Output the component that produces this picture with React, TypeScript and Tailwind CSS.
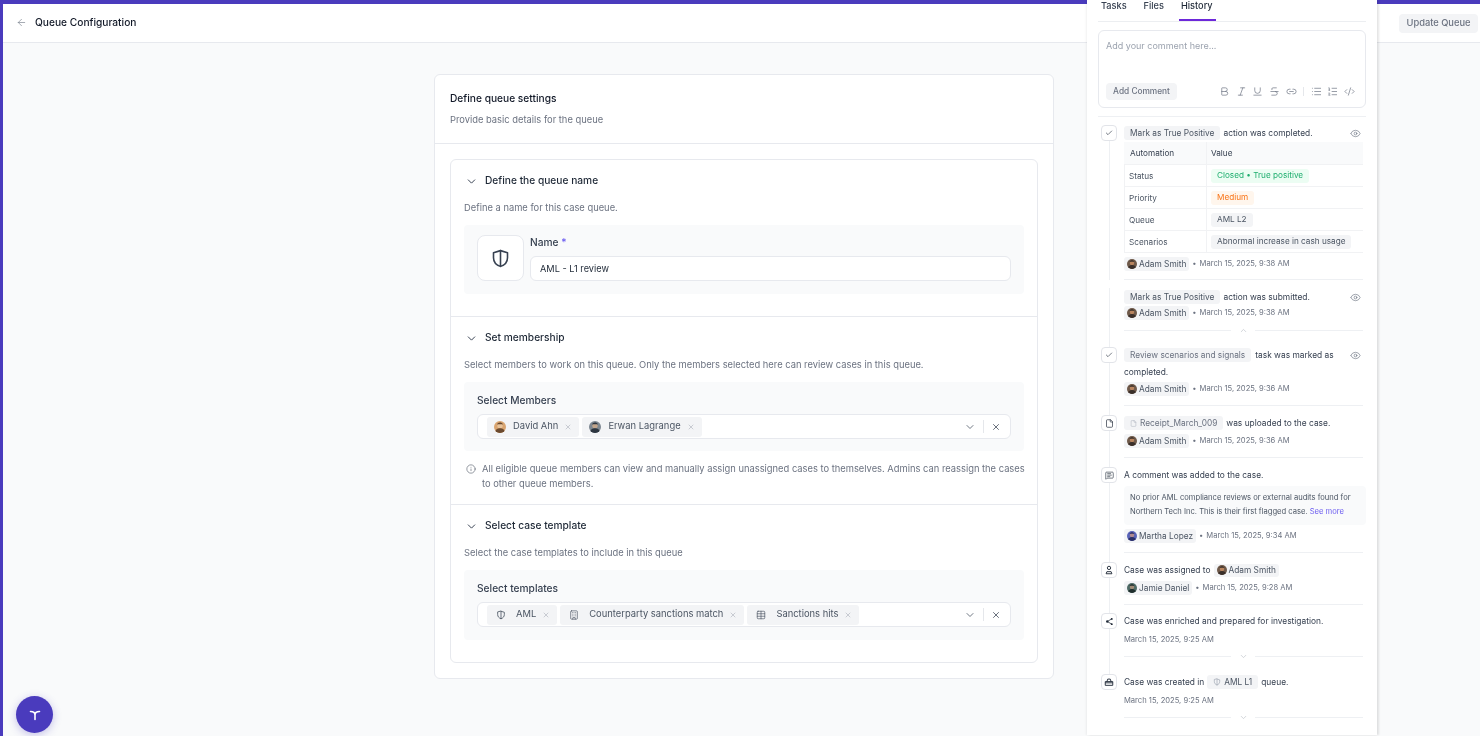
import { ReactNode } from 'react';
import {
  ArrowLeft,
  Bold,
  Building,
  Check,
  ChevronDown,
  ChevronUp,
  CodeXml,
  Eye,
  File,
  Info,
  Italic,
  Link2,
  List,
  ListOrdered,
  MessageSquareText,
  Strikethrough,
  Table,
  Underline,
  X,
} from 'lucide-react';

const ShieldIcon = ({ size = 20, className = '', sw = 2 }: { size?: number; className?: string; sw?: number }) => (
  <svg width={size} height={size} viewBox="0 0 24 24" fill="none" stroke="currentColor" strokeWidth={sw} strokeLinejoin="round" strokeLinecap="round" className={className}>
    <path d="M12 3 20 5.500V11c0 5-3.400 8.400-8 10-4.600-1.600-8-5-8-10V5.500z" />
    <path d="M12 3v18" />
  </svg>
);

const Avatar = ({ tone = 'adam', size = 10 }: { tone?: 'adam' | 'david' | 'erwan' | 'martha' | 'jamie'; size?: number }) => {
  const colors = {
    adam: ['#6f5a4a', '#3a2f2a', '#b9855f'],
    david: ['#d9a46f', '#6b4a2f', '#e8c39a'],
    erwan: ['#7d8790', '#2d3640', '#c2a68c'],
    martha: ['#5a64b8', '#2a2f66', '#b08a90'],
    jamie: ['#4f6b66', '#1f2e2d', '#a08d78'],
  }[tone];
  return (
    <svg width={size} height={size} viewBox="0 0 20 20" className="shrink-0 rounded-full">
      <rect width="20" height="20" fill={colors[0]} />
      <circle cx="10" cy="8" r="4.500" fill={colors[2]} />
      <path d="M1 20c1-6 5-8 9-8s8 2 9 8z" fill={colors[1]} />
      <path d="M5 6c1-4 8-5 10 0-3-1-7-1-10 0z" fill={colors[1]} />
    </svg>
  );
};

const Section = ({
  title,
  desc,
  h,
  border = true,
  children,
}: {
  title: string;
  desc: string;
  h: string;
  border?: boolean;
  children: ReactNode;
}) => (
  <div className={`${h} px-[13px] ${border ? 'border-b border-[#e7e9ee]' : ''}`}>
    <div className="flex h-[41px] items-center gap-[7px] pl-[1px] pt-[1px]">
      <ChevronDown size={13} strokeWidth={1.8} className="text-[#374151]" />
      <span className="text-[10.2px] font-medium text-[#1f2937]">{title}</span>
    </div>
    <p className="h-[13px] text-[9.35px] leading-[13px] text-[#6b7280]">{desc}</p>
    {children}
  </div>
);

const Tag = ({ icon, label, photo = false }: { icon: ReactNode; label: string; photo?: boolean }) => (
  <span className={`flex h-[20px] items-center rounded-[3px] bg-[#f3f4f6] pr-[7px] text-[9.4px] text-[#4b5563] ${photo ? 'pl-[7px]' : 'pl-[9px]'}`}>
    {icon}
    <span className={photo ? 'ml-[7px]' : 'ml-[10px]'}>{label}</span>
    <X size={8} strokeWidth={1.5} className="ml-[6px] text-[#9ca3af]" />
  </span>
);

const MultiSelect = ({ children }: { children: ReactNode }) => (
  <div className="flex h-[25px] items-center rounded-[6px] border border-[#e7e9ee] bg-white pl-[9px] pr-[9px]">
    <div className="flex flex-1 items-center gap-[3px]">{children}</div>
    <ChevronDown size={12} strokeWidth={1.6} className="text-[#4b5563]" />
    <span className="mx-[7px] h-[13px] w-px bg-[#e5e7eb]" />
    <X size={10} strokeWidth={1.8} className="text-[#374151]" />
  </div>
);

const Chip = ({ children, className = '' }: { children: ReactNode; className?: string }) => (
  <span className={`inline-flex h-[14px] items-center gap-[3px] whitespace-nowrap rounded-[3px] bg-[#f3f4f6] px-[6px] text-[8.3px] text-[#4b5563] ${className}`}>
    {children}
  </span>
);

const Author = ({ name, date, tone = 'adam' }: { name: string; date: string; tone?: 'adam' | 'martha' | 'jamie' }) => (
  <div className="flex h-[14px] items-center text-[7.6px] text-[#6b7280]">
    <span className="inline-flex h-[14px] items-center gap-[2px] rounded-[3px] bg-[#f3f4f6] px-[3px] text-[8.3px] text-[#4b5563]">
      <Avatar tone={tone} />
      {name}
    </span>
    <span className="ml-[3px] mr-[3px] text-[#6b7280]">•</span>
    <span>{date}</span>
  </div>
);

const Entry = ({
  icon,
  h,
  last = false,
  divider = 'plain',
  children,
}: {
  icon: ReactNode;
  h: string;
  last?: boolean;
  divider?: 'plain' | 'up' | 'down' | 'none';
  children: ReactNode;
}) => (
  <div className={`relative ${h} pl-[26px]`}>
    {!last && <span className="absolute bottom-0 left-[11px] top-[8px] w-px bg-[#eef0f3]" />}
    {icon && (
      <span className="absolute left-[3px] top-0 flex h-[16px] w-[16px] items-center justify-center rounded-[4px] border border-[#e2e4e9] bg-white text-[#1f2937]">
        {icon}
      </span>
    )}
    {children}
    {divider !== 'none' && (
      <div className="absolute bottom-0 left-[26px] right-[3px] h-px bg-[#eef0f3]">
        {divider !== 'plain' && (
          <span className="absolute left-[107px] top-[-4px] flex h-[9px] w-[24px] items-center justify-center bg-white text-[#c4c8cf]">
            {divider === 'up' ? <ChevronUp size={9} /> : <ChevronDown size={9} />}
          </span>
        )}
      </div>
    )}
  </div>
);

const Line = ({ children, end = false }: { children: ReactNode; end?: boolean }) => (
  <div className="flex items-center justify-between pr-[5px] text-[8.4px] leading-[16px] text-[#374151]">
    <div className="flex items-center gap-[3px] whitespace-nowrap">{children}</div>
    {end && <Eye size={11} strokeWidth={1.4} className="shrink-0 text-[#6b7280]" />}
  </div>
);

const Rail = ({ h }: { h: string }) => (
  <div className={h}>
    <span className="ml-[11px] block h-full w-px bg-[#eef0f3]" />
  </div>
);

const rows = [
  { k: 'Status', v: 'Closed • True positive', c: 'bg-[#ecfdf3] text-[#1fae6f]' },
  { k: 'Priority', v: 'Medium', c: 'bg-[#fff6ed] text-[#f97316]' },
  { k: 'Queue', v: 'AML L2', c: 'bg-[#f3f4f6] text-[#4b5563]' },
  { k: 'Scenarios', v: 'Abnormal increase in cash usage', c: 'bg-[#f3f4f6] text-[#4b5563]' },
];

const HistoryPanel = () => (
  <aside className="absolute bottom-[1px] left-[1087px] top-0 flex w-[290px] flex-col bg-white px-[11px] shadow-[2px_0_2px_rgba(0,0,0,0.1),-1px_0_2px_rgba(0,0,0,0.06)]">
    <div className="flex h-[22px] gap-[17px] border-b border-[#eceef1] pl-[3px] text-[9.2px] font-medium text-[#374151]">
      <span className="leading-[11px]">Tasks</span>
      <span className="leading-[11px]">Files</span>
      <span className="relative leading-[11px] text-[#1f2937]">
        History
        <span className="absolute -left-[2px] -right-[3px] top-[19px] h-[2px] bg-[#6d28d9]" />
      </span>
    </div>
    <div className="mt-[8px] flex h-[78px] flex-col justify-between rounded-[6px] border border-[#e7e9ee] px-[7px] pb-[7px] pt-[8px]">
      <p className="text-[9px] leading-[13px] text-[#9ca3af]">Add your comment here...</p>
      <div className="flex items-center justify-between">
        <span className="flex h-[17px] w-[71px] items-center justify-center rounded-[4px] bg-[#f3f4f6] text-[8.3px] font-medium text-[#6b7280]">
          Add Comment
        </span>
        <div className="flex items-center gap-[5.6px] pr-[3px] text-[#6b7280]">
          <Bold size={11} strokeWidth={1.5} />
          <Italic size={11} strokeWidth={1.5} />
          <Underline size={11} strokeWidth={1.5} />
          <Strikethrough size={11} strokeWidth={1.5} />
          <Link2 size={11} strokeWidth={1.5} />
          <span className="mx-[1px] h-[9px] w-px bg-[#e5e7eb]" />
          <List size={11} strokeWidth={1.5} />
          <ListOrdered size={11} strokeWidth={1.5} />
          <CodeXml size={11} strokeWidth={1.5} />
        </div>
      </div>
    </div>
    <div className="mt-[8px] h-px bg-[#eef0f3]" />
    <div className="pt-[8px]">
      <Entry icon={<Check size={8} strokeWidth={1.8} />} h="h-[155px]">
        <Line end>
          <Chip>Mark as True Positive</Chip>
          <span>action was completed.</span>
        </Line>
        <div className="mt-[1px] w-[239px] border-b border-[#f1f2f4] text-[8.2px] text-[#4b5563]">
          <div className="flex h-[22px] items-center bg-[#f9fafb] text-[#374151]">
            <span className="w-[83px] border-r border-[#f1f2f4] pl-[6px] leading-[22px]">Automation</span>
            <span className="pl-[4px]">Value</span>
          </div>
          {rows.map((r) => (
            <div key={r.k} className="flex h-[22px] items-center border-t border-[#f1f2f4]">
              <span className="w-[83px] border-l border-r border-[#f1f2f4] pl-[4px] leading-[22px]">{r.k}</span>
              <span className="pl-[4px]">
                <span className={`inline-flex h-[14px] items-center rounded-[3px] px-[6px] ${r.c}`}>{r.v}</span>
              </span>
            </div>
          ))}
        </div>
        <div className="mt-[4px]">
          <Author name="Adam Smith" date="March 15, 2025, 9:38 AM" />
        </div>
      </Entry>
      <Entry icon={null} h="h-[51px]" divider="up">
        <div className="pt-[9px]">
          <Line end>
            <Chip>Mark as True Positive</Chip>
            <span>action was submitted.</span>
          </Line>
          <div className="mt-[1px]">
            <Author name="Adam Smith" date="March 15, 2025, 9:38 AM" />
          </div>
        </div>
      </Entry>
      <Rail h="h-[16px]" />
      <Entry icon={<Check size={8} strokeWidth={1.8} />} h="h-[59px]">
        <Line end>
          <Chip className="text-[#6b7280]">Review scenarios and signals</Chip>
          <span className="ml-[1px] mr-auto">task was marked as</span>
        </Line>
        <div className="text-[8.4px] leading-[18px] text-[#374151]">completed.</div>
        <div className="mt-[1px]">
          <Author name="Adam Smith" date="March 15, 2025, 9:36 AM" />
        </div>
      </Entry>
      <Rail h="h-[9px]" />
      <Entry icon={<File size={9} strokeWidth={1.8} />} h="h-[43px]">
        <Line>
          <Chip className="text-[#6b7280]">
            <File size={7} strokeWidth={1.4} className="text-[#9ca3af]" />
            Receipt_March_009
          </Chip>
          <span>was uploaded to the case.</span>
        </Line>
        <div className="mt-[3px]">
          <Author name="Adam Smith" date="March 15, 2025, 9:36 AM" />
        </div>
      </Entry>
      <Rail h="h-[9px]" />
      <Entry icon={<MessageSquareText size={9} strokeWidth={1.6} />} h="h-[86px]">
        <Line>A comment was added to the case.</Line>
        <div className="mt-[3px] h-[39px] rounded-[4px] bg-[#f9fafb] px-[6px] py-[5px] text-[7.6px] leading-[14px] text-[#4b5563]">
          No prior AML compliance reviews or external audits found for
          <br />
          Northern Tech Inc. This is their first flagged case. <span className="text-[#6d5ef0]">See more</span>
        </div>
        <div className="mt-[4px]">
          <Author name="Martha Lopez" date="March 15, 2025, 9:34 AM" tone="martha" />
        </div>
      </Entry>
      <Rail h="h-[9px]" />
      <Entry
        icon={
          <svg width="10" height="10" viewBox="0 0 12 12" fill="none" stroke="currentColor" strokeWidth="1.100" strokeLinejoin="round">
            <circle cx="6" cy="3.500" r="2" />
            <path d="M2.500 10.500 3.500 8h5l1 2.500z" />
          </svg>
        }
        h="h-[43px]"
      >
        <Line>
          <span>Case was assigned to</span>
          <span className="inline-flex h-[13px] items-center gap-[2px] rounded-[3px] bg-[#f3f4f6] px-[3px] text-[8.3px] text-[#4b5563]">
            <Avatar />
            Adam Smith
          </span>
        </Line>
        <div className="mt-[3px]">
          <Author name="Jamie Daniel" date="March 15, 2025, 9:28 AM" tone="jamie" />
        </div>
      </Entry>
      <Rail h="h-[8px]" />
      <Entry
        icon={
          <svg width="9" height="9" viewBox="0 0 12 12" fill="currentColor">
            <circle cx="3" cy="6" r="1.600" />
            <circle cx="9" cy="2.500" r="1.300" />
            <circle cx="9" cy="9.500" r="1.300" />
            <path d="M3 6 9 2.500M3 6l6 3.500" stroke="currentColor" strokeWidth="1" />
          </svg>
        }
        h="h-[44px]"
        divider="down"
      >
        <Line>Case was enriched and prepared for investigation.</Line>
        <div className="mt-[4px] text-[7.6px] leading-[14px] text-[#6b7280]">March 15, 2025, 9:25 AM</div>
      </Entry>
      <Rail h="h-[17px]" />
      <Entry
        icon={
          <svg width="10" height="10" viewBox="0 0 24 24" fill="none" stroke="currentColor" strokeWidth="2.200" strokeLinejoin="round">
            <path d="M3 11h18v9H3zM3 14h18M7 11l2-6h6l2 6" />
          </svg>
        }
        h="h-[44px]"
        last
        divider="down"
      >
        <Line>
          <span>Case was created in</span>
          <Chip className="px-[5px] text-[#4b5563]">
            <ShieldIcon size={8} className="text-[#9ca3af]" />
            AML L1
          </Chip>
          <span>queue.</span>
        </Line>
        <div className="mt-[4px] text-[7.6px] leading-[14px] text-[#6b7280]">March 15, 2025, 9:25 AM</div>
      </Entry>
    </div>
  </aside>
);

export default function App() {
  return (
    <div className="relative h-[736px] w-[1480px] overflow-hidden font-['Inter',sans-serif] blur-[0.3px]">
      <div className="flex h-full flex-col border-l-[3px] border-t-[4px] border-[#4a3bbd] bg-[#f9fafb]">
        <header className="flex h-[39px] shrink-0 items-center justify-between border-b border-[#e7e9ee] bg-white pl-[13px] pr-[2px]">
          <div className="flex items-center gap-[8px]">
            <ArrowLeft size={11} strokeWidth={1.3} className="text-[#6b7280]" />
            <span className="text-[10.2px] font-medium text-[#111827]">Queue Configuration</span>
          </div>
          <span className="flex h-[19px] w-[79px] items-center justify-center rounded-[4px] bg-[#f3f4f6] text-[9.3px] font-medium text-[#6b7280]">
            Update Queue
          </span>
        </header>

        <main className="flex flex-1 justify-start pl-[431px] pt-[31px]">
          <div className="h-[605px] w-[620px] rounded-[6px] border border-[#e7e9ee] bg-white">
            <div className="h-[69px] border-b border-[#e7e9ee] px-[15px] pt-[16px]">
              <h2 className="text-[10.2px] font-medium leading-[14px] text-[#111827]">Define queue settings</h2>
              <p className="mt-[8px] text-[9.35px] leading-[13px] text-[#6b7280]">Provide basic details for the queue</p>
            </div>
            <div className="mx-[15px] mt-[15px] h-[504px] rounded-[6px] border border-[#e7e9ee]">
              <Section title="Define the queue name" desc="Define a name for this case queue." h="h-[157px]">
                <div className="mt-[11px] flex h-[69px] gap-[6px] rounded-[4px] bg-[#f9fafb] px-[13px] pt-[10px]">
                  <div className="flex h-[46px] w-[47px] shrink-0 items-center justify-center rounded-[8px] border border-[#e7e9ee] bg-white text-[#374151]">
                    <ShieldIcon size={21} sw={1.8} />
                  </div>
                  <div className="flex-1">
                    <div className="text-[10.2px] font-medium leading-[14px] text-[#374151]">
                      Name <span className="text-[#6d5ef0]">*</span>
                    </div>
                    <div className="mt-[7px] flex h-[25px] items-center rounded-[6px] border border-[#e7e9ee] bg-white pl-[9px] text-[9.2px] text-[#1f2937]">
                      AML - L1 review
                    </div>
                  </div>
                </div>
              </Section>
              <Section
                title="Set membership"
                desc="Select members to work on this queue. Only the members selected here can review cases in this queue."
                h="h-[188px]"
              >
                <div className="mt-[11px] h-[69px] rounded-[4px] bg-[#f9fafb] px-[13px] pt-[11px]">
                  <div className="text-[10.2px] font-medium leading-[14px] text-[#374151]">Select Members</div>
                  <div className="mt-[7px]">
                    <MultiSelect>
                      <Tag photo icon={<Avatar tone="david" size={12} />} label="David Ahn" />
                      <Tag photo icon={<Avatar tone="erwan" size={12} />} label="Erwan Lagrange" />
                    </MultiSelect>
                  </div>
                </div>
                <div className="-mr-[4px] mt-[10px] flex gap-[6px] pl-[2px]">
                  <Info size={10} strokeWidth={1.4} className="mt-[3px] shrink-0 text-[#4b5563]" />
                  <p className="text-[9.35px] leading-[15px] text-[#6b7280]">
                    All eligible queue members can view and manually assign unassigned cases to themselves. Admins can reassign the cases to other queue members.
                  </p>
                </div>
              </Section>
              <Section title="Select case template" desc="Select the case templates to include in this queue" h="h-[157px]" border={false}>
                <div className="mt-[11px] h-[70px] rounded-[4px] bg-[#f9fafb] px-[13px] pt-[11px]">
                  <div className="text-[10.2px] font-medium leading-[14px] text-[#374151]">Select templates</div>
                  <div className="mt-[7px]">
                    <MultiSelect>
                      <Tag icon={<ShieldIcon size={10} className="text-[#4b5563]" />} label="AML" />
                      <Tag icon={<Building size={10} strokeWidth={1.6} className="text-[#4b5563]" />} label="Counterparty sanctions match" />
                      <Tag icon={<Table size={10} strokeWidth={1.6} className="text-[#4b5563]" />} label="Sanctions hits" />
                    </MultiSelect>
                  </div>
                </div>
              </Section>
            </div>
          </div>
        </main>
      </div>

      <button className="absolute bottom-[3px] left-[16px] flex h-[37px] w-[37px] items-center justify-center rounded-full bg-[#4a3bbd] text-white shadow-[0_2px_8px_rgba(74,59,189,0.3)]">
        <svg width="12" height="12" viewBox="0 0 12 12" fill="none" stroke="currentColor" strokeWidth="1.600" strokeLinecap="round" strokeLinejoin="round">
          <path d="M1.500 2.500C4 2.500 6 3.500 6 6v4.500M10.500 2.500C8 2.500 6 3.500 6 6" />
        </svg>
      </button>

      <HistoryPanel />
    </div>
  );
}
